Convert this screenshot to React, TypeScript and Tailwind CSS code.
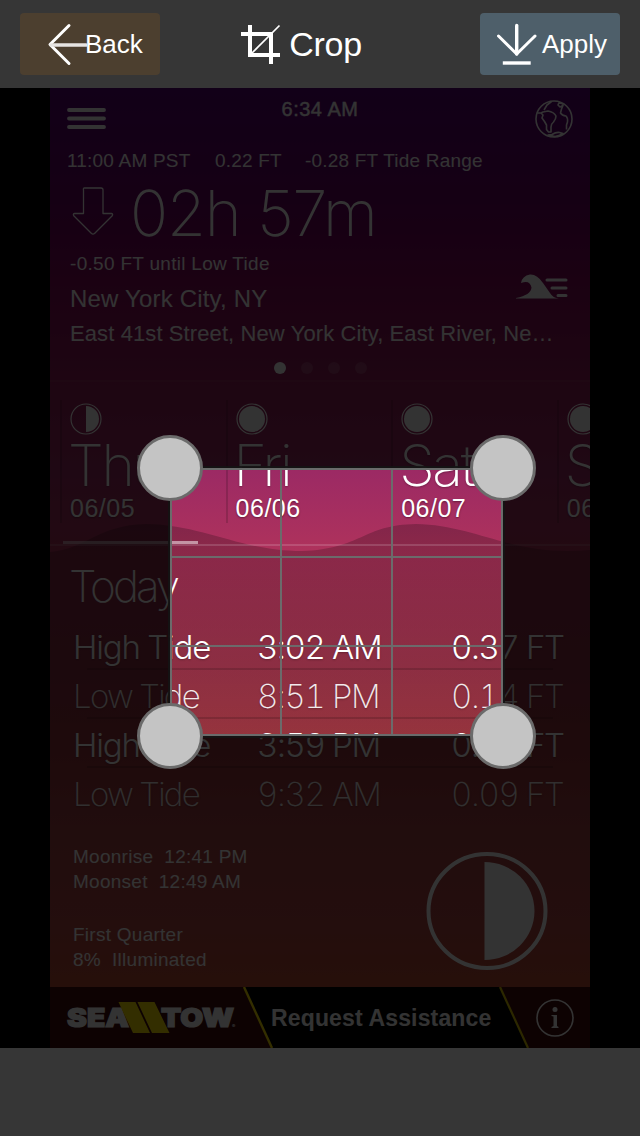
import React from "react";

const sans = "font-['Liberation_Sans',Arial,sans-serif]";
const thin = "font-['Inter','Liberation_Sans',sans-serif]";

function SmallMoon({ half }: { half?: boolean }) {
  return (
    <svg width="32" height="32" viewBox="0 0 32 32" className="block">
      <circle cx="16" cy="16" r="15" fill="none" stroke="#fff" strokeWidth="1.2" />
      {half ? <path d="M16 3a13 13 0 0 1 0 26z" fill="#fff" /> : <circle cx="16" cy="16" r="13" fill="#fff" />}
    </svg>
  );
}

const days = [
  { name: "Thu", date: "06/05", half: true },
  { name: "Fri", date: "06/06" },
  { name: "Sat", date: "06/07" },
  { name: "Sun", date: "06/08" },
];

const tides = [
  { label: "High Tide", time: "3:02 AM", level: "0.37 FT", high: true },
  { label: "Low Tide", time: "8:51 PM", level: "0.14 FT" },
  { label: "High Tide", time: "3:59 PM", level: "0.37 FT", high: true },
  { label: "Low Tide", time: "9:32 AM", level: "0.09 FT" },
];

function TopBar() {
  return (
    <header className="flex h-[88px] shrink-0 justify-between bg-[#363636] px-5 pt-[13px]">
      <button className="flex h-[62px] w-[140px] items-center rounded bg-[#4c3f2f] pl-[27px]">
        <svg width="40" height="44" viewBox="0 0 40 44" fill="none" stroke="#fff" strokeWidth="3" strokeLinecap="round" className="shrink-0">
          <path d="M22 3.5 3 22.5 22 41.5" strokeLinejoin="round" />
          <path d="M4 23H39" strokeWidth="3.4" stroke="#e6e4e2" />
        </svg>
        <span className="-ml-[2px] text-[26px] leading-none">Back</span>
      </button>
      <h1 className="mr-[37px] flex h-[62px] items-center text-[34px] leading-none">
        <svg width="40" height="40" viewBox="0 0 40 40" fill="none" stroke="#fff" strokeWidth="4" className="shrink-0">
          <path d="M9 1V31H39M0 10H30V40" />
          <path d="M11 29 38.500 1.500" strokeWidth="1.700" />
        </svg>
        <span className="ml-2 tracking-[-0.3px]">Crop</span>
      </h1>
      <button className="flex h-[62px] w-[140px] items-center rounded bg-[#4e5f6a] pl-4">
        <svg width="42" height="44" viewBox="0 0 42 44" fill="none" stroke="#fff" strokeWidth="3.400" strokeLinecap="round" className="shrink-0">
          <path d="M20.700 3.500V32" />
          <path d="M2.500 14 20.700 32 39 14" strokeLinejoin="round" strokeWidth="3" />
          <path d="M8.500 41H33" strokeLinecap="square" />
        </svg>
        <span className="ml-1 text-[26px] leading-none">Apply</span>
      </button>
    </header>
  );
}

function Globe() {
  return (
    <svg width="38" height="38" viewBox="0 0 38 38" fill="none" stroke="#fff" strokeWidth="1.600" strokeLinejoin="round">
      <circle cx="19" cy="19" r="18" />
      <path d="M16.500 1.500 12 5 9 10M2.500 13H6L8 12 13 11Q19 12 21 16Q21 19 18.500 22Q16 24 16 27V32H13.500L11.500 29.500V25L9.500 21.500L7 18L8 15L6 13" />
      <path d="M24 2.500 23 5 25 7 28 5.500V4L24 2.500M28 5.500 26.500 9 25.500 13Q27 15.500 31 16Q33 18 32.500 22L31.500 25V29.500" />
      <path d="M13 35 17 34.500Q21 32 24.500 32.500L28 33.500Q24 36 20 36.500Z" />
    </svg>
  );
}

function Conditions() {
  return (
    <section className="flex h-[292px] shrink-0 flex-col">
      <div className="flex h-[63px] shrink-0 items-start justify-between pr-[17px] pl-[17px]">
        <svg width="39" height="22" viewBox="0 0 39 22" stroke="#fff" strokeWidth="3.800" strokeLinecap="round" className="mt-5">
          <path d="M2 2H37M2 10.500H37M2 19H37" />
        </svg>
        <p className="mt-[9px] -ml-[1px] text-[20px] leading-6 font-normal tracking-[0.5px] [-webkit-text-stroke:0.4px_#fff]">6:34 AM</p>
        <div className="mt-3"><Globe /></div>
      </div>
      <div className="flex h-5 shrink-0 items-center gap-6 pl-[17px] text-[19px] tracking-[0.2px] whitespace-nowrap">
        <span className="w-[124px]">11:00 AM PST</span>
        <span className="w-[66px]">0.22 FT</span>
        <span>-0.28 FT Tide Range</span>
      </div>
      <div className="flex h-[82px] shrink-0 items-center pl-[22px]">
        <svg width="42" height="50" viewBox="0 0 42 50" fill="none" stroke="#fff" strokeWidth="1.300" strokeLinejoin="round" className="-mt-[3px]">
          <path d="M12.500 2H29a2 2 0 0 1 2 2V27.500H39.500Q41.500 28 40 30L22.500 47.500Q21 48.600 19.500 47.500L2 30Q.5 28 2.500 27.500H11.500V4Q11 2 12.500 2Z" />
        </svg>
        <span className={thin + " mt-[3px] ml-[16px] text-[63px] leading-none font-extralight tracking-[-1.1px]"}>02h 57m</span>
      </div>
      <div className="flex items-start justify-between pr-[21px] pl-5">
        <div className="whitespace-nowrap">
          <p className="h-[22px] text-[19px] leading-[22px] tracking-[0.3px]">-0.50 FT until Low Tide</p>
          <p className="mt-[10px] h-7 text-[24px] leading-7 tracking-[0.18px]">New York City, NY</p>
        </div>
        <svg width="54" height="28" viewBox="0 0 54 28" className="mt-5">
          <path d="M1 25.500V25Q16 22 16.500 14.500Q15 6.500 6 10Q7 3 15 1.500Q22 1 28 10L35 20Q38 25 44 25.500Z" fill="#fff" />
          <path d="M32 7H51M37 15H51M43 22.500H51" stroke="#fff" strokeWidth="3" strokeLinecap="round" />
        </svg>
      </div>
      <p className="mt-[9px] pl-5 text-[22px] leading-6 tracking-[0.1px] whitespace-nowrap">East 41st Street, New York City, East River, Ne…</p>
      <div className="mt-[16px] flex justify-center gap-[15px]">
        <i className="size-3 rounded-full bg-white" />
        <i className="size-3 rounded-full bg-white/15" />
        <i className="size-3 rounded-full bg-white/15" />
        <i className="size-3 rounded-full bg-white/15" />
      </div>
    </section>
  );
}

function DayStrip() {
  return (
    <section className="flex h-[166px] shrink-0 overflow-hidden border-t-2 border-white/5 pt-[18px] pl-[10px]">
      {days.map((d) => (
        <div key={d.date} className="h-[123px] w-[165.600px] shrink-0 border-l-2 border-black/15 pl-[9px]">
          <div className="-ml-[1px] pt-[3px]"><SmallMoon half={d.half} /></div>
          <p className={thin + " mt-1 -ml-[3px] h-[50px] text-[57px] leading-[54px] font-extralight tracking-[-2.300px] [text-shadow:0_1px_2px_#0004]"}>{d.name}</p>
          <p className="mt-[5px] -ml-[1px] text-[25px] leading-7 tracking-[0.5px] [text-shadow:0_1px_2px_#0006]">{d.date}</p>
        </div>
      ))}
    </section>
  );
}

function TideTable() {
  return (
    <section className={thin + " h-[275px] shrink-0"}>
      <h2 className="pt-[13px] pl-[19px] text-[44px] leading-[54px] font-extralight tracking-[-3px]">Today</h2>
      <div className="mt-2">
        {tides.map((t, i) => (
          <div key={i}>
            <div
              className={
                "flex h-[47px] items-center pt-[5px] pl-[23px] text-[33px] leading-none whitespace-nowrap tabular-nums [text-shadow:0_1px_2px_#0004] " +
                (t.high ? "font-light" : "font-extralight text-white/90")
              }
            >
              <span className={"w-[184px] " + (t.high ? "tracking-[-1.2px]" : "tracking-[-1.7px]")}>{t.label}</span>
              <span className="w-[194px] tracking-[-1.35px]">{t.time}</span>
              <span className="tracking-[-1.35px]">{t.level}</span>
            </div>
            {i < 3 && <div className="mr-[37px] ml-[37px] h-[2px] bg-black/15" />}
          </div>
        ))}
      </div>
    </section>
  );
}

function MoonDetails() {
  return (
    <section className="flex flex-1 justify-between pr-[41px] pl-[23px]">
      <div className="pt-[23px] text-[19px] leading-[25.300px] tracking-[0.26px] whitespace-pre">
        <p>Moonrise  12:41 PM</p>
        <p>Moonset  12:49 AM</p>
        <p className="mt-[27px]">First Quarter</p>
        <p>8%  Illuminated</p>
      </div>
      <svg width="124" height="120" viewBox="0 0 124 120" className="mt-[30px]">
        <ellipse cx="62" cy="60" rx="58.500" ry="57" fill="none" stroke="#fff" strokeWidth="4" />
        <path d="M59.500 11A50 49 0 0 1 59.500 109Z" fill="#fff" />
      </svg>
    </section>
  );
}

function SponsorBar() {
  return (
    <section className="flex h-[61px] shrink-0 items-center overflow-hidden bg-[#430d0d]">
      <svg width="194" height="61" viewBox="0 0 194 61" className="shrink-0">
        <g fill="#fff" fontFamily="Inter, Liberation Sans, sans-serif" fontWeight="900" fontSize="25.500">
          <text x="17" y="40" textLength="62" lengthAdjust="spacingAndGlyphs" stroke="#fff" strokeWidth="1.200">SEA</text>
          <text x="111" y="40" textLength="73" lengthAdjust="spacingAndGlyphs" stroke="#fff" strokeWidth="1.200">TOW</text>
          <text x="182" y="41" fontSize="5">®</text>
        </g>
        <path d="M68.500 15H85.500L100 46H83ZM87.500 15H104.500L119.500 46H102Z" fill="#ffe500" />
      </svg>
      <svg width="30" height="61" viewBox="0 0 30 61" className="relative shrink-0 overflow-visible">
        <path d="M0 0H30V61H28Z" fill="#000" />
        <path d="M0 0 28 61" stroke="#ffe500" strokeWidth="2.400" />
      </svg>
      <span className="relative flex h-full w-[226px] shrink-0 items-center bg-black pt-[1px] text-[23px] font-bold tracking-[0.150px] whitespace-nowrap">
        <span className="-ml-[3px]">Request Assistance</span>
      </span>
      <svg width="30" height="61" viewBox="0 0 30 61" className="relative shrink-0 overflow-visible">
        <path d="M0 0 28 61H0Z" fill="#000" />
        <path d="M0 0 28 61" stroke="#dcc800" strokeWidth="2.200" />
      </svg>
      <svg width="38" height="38" viewBox="0 0 38 38" className="ml-[6px] shrink-0">
        <circle cx="19" cy="19" r="18" fill="none" stroke="#fff" strokeWidth="1.600" />
        <circle cx="19" cy="10.500" r="2.500" fill="#fff" />
        <path d="M15.500 16H21V27L22.500 28V29H15.500V28L17.500 27V17.500L15.500 17Z" fill="#fff" />
      </svg>
    </section>
  );
}

function Waves() {
  return (
    <svg width="540" height="436" viewBox="0 0 540 436" className="absolute top-[435px] left-0">
      <defs>
        <linearGradient id="tide" x1="0" y1="0" x2="0" y2="1">
          <stop offset="0" stopColor="#000" stopOpacity=".22" />
          <stop offset=".35" stopColor="#000" stopOpacity=".14" />
          <stop offset="1" stopColor="#000" stopOpacity="0" />
        </linearGradient>
      </defs>
      <path d="M0 29C36 26 48 2 96 1C155 2 190 28 252 28C312 26 312 2 366 1C421 2 456 28 517 28Q530 28 540 27V436H0Z" fill="url(#tide)" />
    </svg>
  );
}

function Handle({ place }: { place: string }) {
  return <i className={"absolute size-[66px] rounded-full border-[3px] border-[#6b6b6b] bg-[#c4c4c4] " + place} />;
}

function CropFrame() {
  return (
    <div className="absolute top-[380px] left-[170px] h-[268px] w-[333px] border-2 border-[#6b6b6b] shadow-[0_0_0_2px_rgba(20,20,20,0.9),0_0_0_1200px_rgba(0,0,0,0.8)]">
      <i className="absolute inset-y-0 left-[108px] w-[2px] bg-[#6b6b6b]" />
      <i className="absolute inset-y-0 left-[219px] w-[2px] bg-[#6b6b6b]" />
      <i className="absolute inset-x-0 top-[86px] h-[2px] bg-[#6b6b6b]" />
      <i className="absolute inset-x-0 top-[175px] h-[2px] bg-[#6b6b6b]" />
      <Handle place="-top-[35px] -left-[35px]" />
      <Handle place="-top-[35px] -right-[35px]" />
      <Handle place="-bottom-[35px] -left-[35px]" />
      <Handle place="-right-[35px] -bottom-[35px]" />
    </div>
  );
}

export default function App() {
  return (
    <div className={"flex h-[1136px] w-[640px] flex-col overflow-hidden bg-[#363636] text-white " + sans}>
      <TopBar />
      <main className="relative flex h-[960px] shrink-0 justify-center overflow-hidden bg-black">
        <div className="relative flex h-[960px] w-[540px] flex-col overflow-hidden bg-[linear-gradient(180deg,#5a0078_0%,#6c0064_12%,#86085c_20%,#961e5a_31%,#9c2a64_40%,#ae325c_48%,#a4364e_60%,#a83a44_68%,#b04646_78%,#b44646_86%,#be4b32_94%)]">
          <Waves />
          <div className="relative flex flex-1 flex-col">
            <Conditions />
            <DayStrip />
            <div className="h-0">
              <div className="-mt-[5px] ml-[13px] h-[3px] w-[135px] bg-white/50" />
              <div className="h-[2px] bg-white/15" />
            </div>
            <TideTable />
            <MoonDetails />
            <SponsorBar />
          </div>
        </div>
        <CropFrame />
      </main>
      <footer className="h-[88px] shrink-0 bg-[#363636]" />
    </div>
  );
}
